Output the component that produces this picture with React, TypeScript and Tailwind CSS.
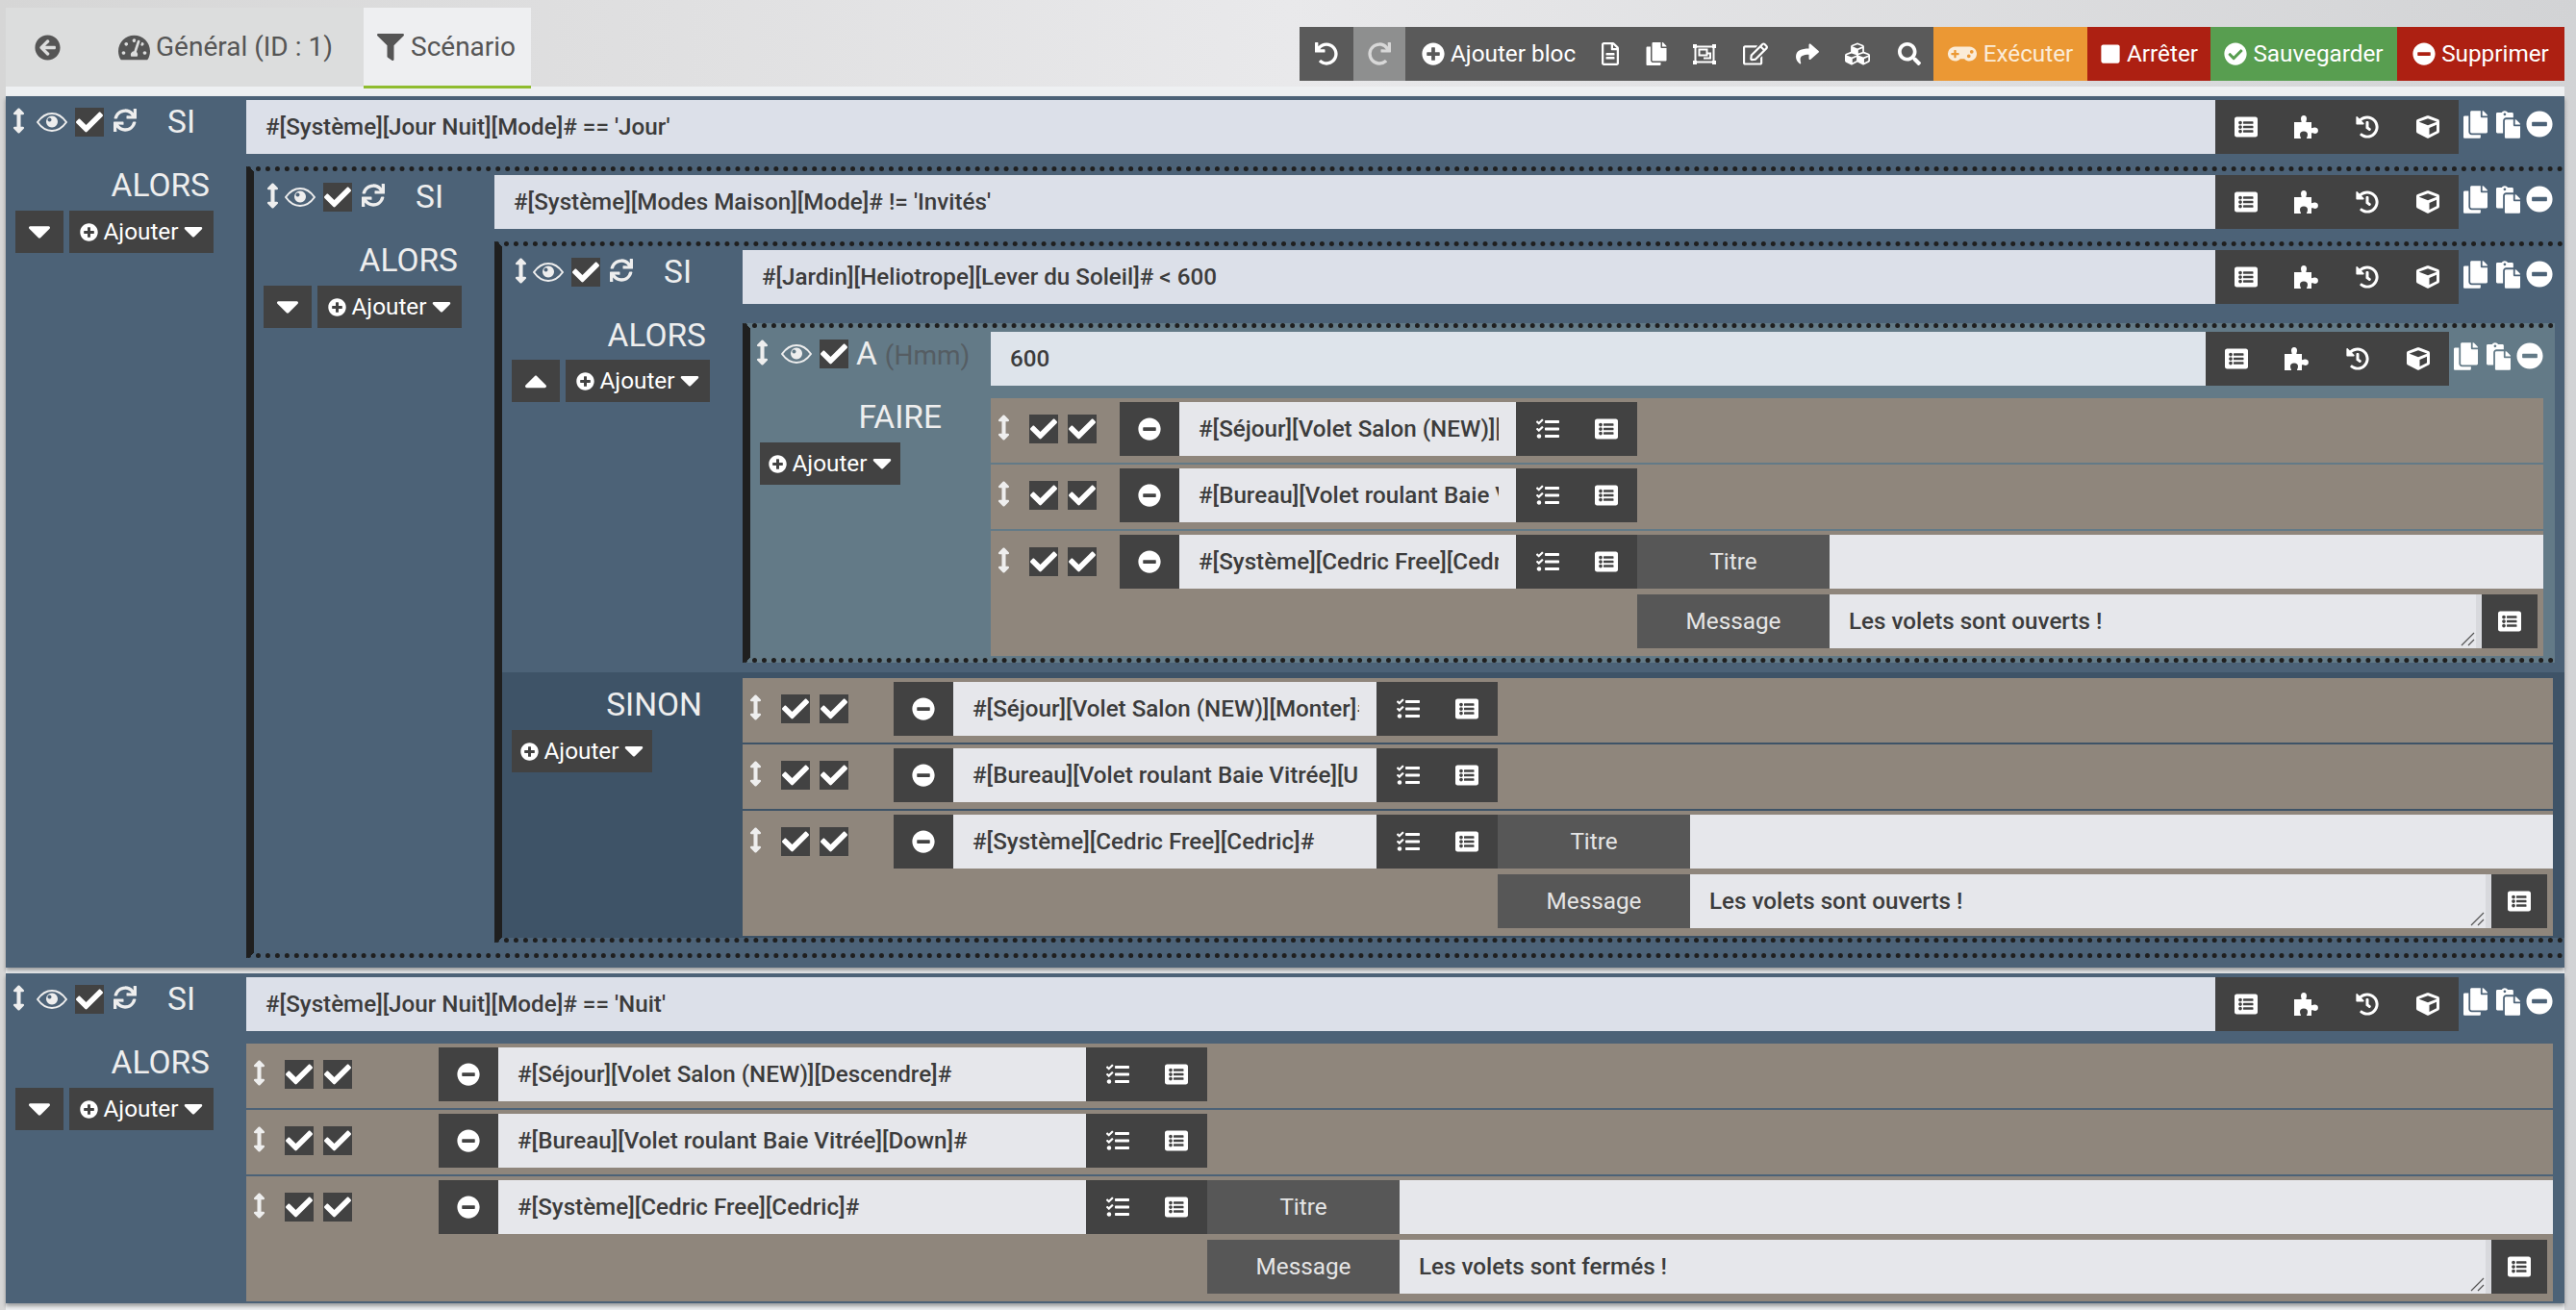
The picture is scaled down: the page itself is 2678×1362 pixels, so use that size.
import React from 'react';
import {
  FaArrowCircleLeft, FaTachometerAlt, FaFilter, FaUndo, FaRedo, FaPlusCircle, FaRegFileAlt, FaCopy,
  FaRegEdit, FaShare, FaCubes, FaSearch, FaGamepad, FaStop, FaCheckCircle, FaMinusCircle,
  FaListAlt, FaHistory, FaCube, FaPaste, FaArrowsAltV, FaCheck, FaSync, FaCaretDown,
  FaCaretUp, FaTasks,
} from 'react-icons/fa';

const EyeIcon = () => (
  <svg className="mt-[5px] h-[20px] w-[32px] shrink-0" viewBox="0 0 32 20">
    <path d="M1 10 C6 3 11 1 16 1 C21 1 26 3 31 10 C26 17 21 19 16 19 C11 19 6 17 1 10Z" fill="none" stroke="currentColor" strokeWidth="2" />
    <path fillRule="evenodd" fill="currentColor" d="M16 3.5 a6 6 0 1 0 0.01 0Z M13.5 5.5 a2 2 0 1 1 -0.01 0Z" />
  </svg>
);

const PuzzleIcon = () => (
  <svg className="ml-[2px] h-[24px] w-[27px]" viewBox="0 0 27 24" fill="currentColor">
    <path d="M0 7 H7.5 C8 6 7 5.5 7 3.5 A3 3.5 0 0 1 13 3.5 C13 5.5 12 6 12.5 7 H18 V13 C19 13.5 20 12.5 22 12.5 A3.5 3.3 0 0 1 22 19 C20 19 19 18 18 18.5 V24 H13 C13 22.5 14 22 14 20 A4 3.5 0 0 0 6 20 C6 22 7 22.5 7 24 H0 Z" />
  </svg>
);

const GroupIcon = () => (
  <svg className="h-[21px] w-[24px]" viewBox="0 0 24 21" fill="none" stroke="currentColor" strokeWidth="2">
    <rect x="2.5" y="2.5" width="19" height="16" />
    <rect x="6.5" y="5.5" width="8" height="6" />
    <path d="M11 14.5 H18 V9.5 H15" />
    <g fill="currentColor" stroke="none">
      <rect x="0" y="0" width="4" height="4" />
      <rect x="20" y="0" width="4" height="4" />
      <rect x="0" y="17" width="4" height="4" />
      <rect x="20" y="17" width="4" height="4" />
    </g>
  </svg>
);

const CheckBox = () => (
  <span className="flex h-[30px] w-[30px] shrink-0 items-center justify-center bg-[#424242] text-white">
    <FaCheck size={28} />
  </span>
);

const AddButton = ({ width }: { width: string }) => (
  <div className={`${width} flex h-[44px] items-center justify-center gap-[6px] bg-[#424242] text-[24.3px] text-white`}>
    <FaPlusCircle size={19} />
    <span>Ajouter</span>
    <FaCaretDown className="-mt-[2px] h-[32px] w-[20px]" />
  </div>
);

const FoldButton = ({ up }: { up?: boolean }) => (
  <div className="flex h-[44px] w-[50px] items-center justify-center bg-[#424242] text-white">
    {up ? <FaCaretUp className="h-[38px] w-[24px]" /> : <FaCaretDown className="-mt-[2px] h-[38px] w-[24px]" />}
  </div>
);

const Controls = ({ arrowPad, label, refresh = true }: { arrowPad: string; label: string; refresh?: boolean }) => (
  <div className="flex h-[30px] items-start text-[#eeeeee]">
    <span className={`${arrowPad} flex w-[32px] shrink-0`}>
      <FaArrowsAltV className="h-[27px] w-[13px]" />
    </span>
    <EyeIcon />
    <span className="ml-[8px]"><CheckBox /></span>
    {refresh ? (
      <>
        <FaSync className="ml-[10px] mt-[1px] h-[24px] w-[24px] shrink-0" />
        <span className="ml-[32px] text-[33.5px] leading-[30px]">{label}</span>
      </>
    ) : (
      <span className="ml-[8px] flex items-baseline whitespace-nowrap text-[33.5px] leading-[30px]">
        {label}
        <span className="ml-[8px] text-[28px] text-[#555d63]">(Hmm)</span>
      </span>
    )}
  </div>
);

const ToolsBlock = () => (
  <div className="grid h-[56px] w-[253px] shrink-0 grid-cols-4 place-items-center bg-[#424242] text-white">
    <FaListAlt size={24} />
    <PuzzleIcon />
    <FaHistory size={24} />
    <FaCube size={24} />
  </div>
);

const ExprRow = ({ text, light }: { text: string; light?: boolean }) => (
  <div className="flex pr-[12px]">
    <div className={`${light ? 'bg-[#dee4eb]' : 'bg-[#dce0e9]'} h-[56px] min-w-0 flex-1 truncate pl-[20px] text-[24.2px] leading-[56px] font-medium text-[#3c3c3c]`}>
      {text}
    </div>
    <ToolsBlock />
    <div className="flex w-[98px] shrink-0 items-start pl-[5px] pt-[11px] text-white">
      <FaCopy className="h-[29px] w-[25px] shrink-0" />
      <FaPaste className="ml-[9px] h-[29px] w-[25px] shrink-0" />
      <FaMinusCircle className="ml-[6px] h-[28px] w-[28px] shrink-0" />
    </div>
  </div>
);

const Field = ({ label, value, area }: { label: string; value?: string; area?: boolean }) => (
  <div className={`${area ? 'mt-[6px] pr-[6px]' : ''} flex h-[56px]`}>
    <div className="flex w-[200px] shrink-0 items-center justify-center bg-[#575757] text-[24.3px] text-[#e5e5e5]">{label}</div>
    <div className="relative h-[56px] min-w-0 flex-1 bg-[#e6e7eb] pl-[20px] text-[24.2px] leading-[56px] font-medium text-[#3c3c3c]">
      {value}
      {area && (
        <svg className="absolute bottom-[2px] right-[1px] h-[15px] w-[15px]" viewBox="0 0 15 15" fill="none" stroke="#555" strokeWidth="1.2">
          <path d="M1 14 L14 1 M8 14 L14 8" />
        </svg>
      )}
    </div>
    {area && (
      <>
        <div className="h-[56px] w-[6px] shrink-0 bg-[#d8d9dd]" />
        <div className="flex w-[58px] shrink-0 items-center justify-center bg-[#424242] text-white">
          <FaListAlt size={24} />
        </div>
      </>
    )}
  </div>
);

type RowProps = { left: string; input: string; text: string; message?: string };

const ActionRow = ({ left, input, text, message }: RowProps) => (
  <div className={`${message ? 'h-[130px]' : 'h-[67px]'} flex bg-[#8f867c] pt-[4px]`}>
    <div className={`${left} flex h-[56px] shrink-0 items-start pt-[13px] text-[#eeeeee]`}>
      <span className="flex w-[40px] shrink-0 pl-[7px]">
        <FaArrowsAltV className="h-[27px] w-[13px]" />
      </span>
      <CheckBox />
      <span className="ml-[10px]"><CheckBox /></span>
    </div>
    <div className="flex h-[56px] w-[62px] shrink-0 items-center justify-center bg-[#424242] text-white">
      <FaMinusCircle size={24} />
    </div>
    <div className={`${input} h-[56px] shrink-0 bg-[#e6e7eb] pl-[20px] pr-[18px]`}>
      <div className="overflow-hidden whitespace-nowrap text-[24.2px] leading-[56px] font-medium text-[#3c3c3c]">{text}</div>
    </div>
    <div className="flex h-[56px] w-[126px] shrink-0 items-center bg-[#424242] pl-[21px] text-white">
      <FaTasks size={24} />
      <FaListAlt size={24} className="ml-[37px]" />
    </div>
    {message && (
      <div className="min-w-0 flex-1">
        <Field label="Titre" />
        <Field label="Message" value={message} area />
      </div>
    )}
  </div>
);

const Actions = ({ left, wide, names, message }: { left: string; wide: string; names: string[]; message: string }) => (
  <div className="flex flex-col gap-[2px]">
    {names.map((n, i) => (
      <ActionRow key={n} left={left} input={wide} text={n} message={i === 2 ? message : undefined} />
    ))}
  </div>
);

const Column = ({ children, word, wordPad }: { children: React.ReactNode; word: string; wordPad: string }) => (
  <>
    {children}
    <div className={`${wordPad} mt-[31px] h-[40px] text-right text-[33.5px] leading-[40px] text-[#eeeeee]`}>{word}</div>
  </>
);

const Dotted = 'border-y-[5px] border-l-8 border-dotted border-[#1f1f1f] [border-left-style:solid]';

export default function App() {
  return (
    <div className="h-[1362px] w-[2678px] overflow-hidden bg-gradient-to-r from-[#d6d6d6] via-[#e9e9eb] to-[#d2d3d5] pl-[6px] pr-[12px] [font-family:Roboto,sans-serif]">
      {/* tabs and toolbar */}
      <header className="flex h-[90px] items-start pt-[8px]">
        <div className="flex h-[82px] w-[372px] shrink-0 items-center bg-[#dcdddd] text-[28px] text-[#555555]">
          <FaArrowCircleLeft size={27} className="ml-[30px]" />
          <FaTachometerAlt size={33} className="ml-[60px]" />
          <span className="ml-[6px] whitespace-nowrap">Général (ID : 1)</span>
        </div>
        <div className="relative z-10 flex h-[84px] w-[174px] shrink-0 items-center border-b-[3px] border-[#8fbc2f] bg-[#eeeff1] pl-[14px] text-[28px] text-[#555555]">
          <FaFilter size={28} />
          <span className="ml-[7px]">Scénario</span>
        </div>
        <div className="ml-auto mt-[20px] flex h-[56px] text-[24.3px] text-white">
          <div className="flex w-[56px] items-center justify-center bg-[#5a5a5a]"><FaUndo size={24} /></div>
          <div className="flex w-[54px] items-center justify-center bg-[#8e8f8f] text-[#d8d8d8]"><FaRedo size={24} /></div>
          <div className="flex w-[549px] items-center bg-[#5a5a5a]">
            <div className="flex w-[189px] shrink-0 items-center pl-[17px]">
              <FaPlusCircle size={24} />
              <span className="ml-[6px] whitespace-nowrap">Ajouter bloc</span>
            </div>
            <div className="flex w-[48px] justify-center"><FaRegFileAlt size={24} /></div>
            <div className="flex w-[48px] justify-center"><FaCopy size={24} /></div>
            <div className="flex w-[52px] justify-center"><GroupIcon /></div>
            <div className="flex w-[54px] justify-center"><FaRegEdit size={26} /></div>
            <div className="flex w-[54px] justify-center"><FaShare size={24} /></div>
            <div className="flex w-[50px] justify-center"><FaCubes size={26} /></div>
            <div className="flex w-[54px] justify-center pl-[4px]"><FaSearch size={24} /></div>
          </div>
          <div className="flex w-[160px] items-center justify-center gap-[7px] bg-[#eb9834] text-[#fbecd8]"><FaGamepad size={30} /><span>Exécuter</span></div>
          <div className="flex w-[128px] items-center justify-center gap-[6px] bg-[#ad2012]"><FaStop size={22} /><span>Arrêter</span></div>
          <div className="flex w-[194px] items-center justify-center gap-[6px] bg-[#589e50]"><FaCheckCircle size={24} /><span>Sauvegarder</span></div>
          <div className="flex w-[174px] items-center justify-center gap-[6px] bg-[#ad2012]"><FaMinusCircle size={24} /><span>Supprimer</span></div>
        </div>
      </header>

      <main className="h-[1272px] bg-[#eef0f2] pt-[10px]">
        {/* premier bloc SI */}
        <section className="flex h-[906px] bg-[#4c6277] pt-[4px] shadow-[0_3px_4px_rgba(0,0,0,0.35)]">
          <div className="w-[250px] shrink-0 pt-[8px]">
            <Column word="ALORS" wordPad="pr-[38px]">
              <Controls arrowPad="pl-[7px]" label="SI" />
            </Column>
            <div className="ml-[10px] mt-[6px] flex gap-[6px]">
              <FoldButton />
              <AddButton width="w-[150px]" />
            </div>
          </div>
          <div className="min-w-0 flex-1">
            <ExprRow text="#[Système][Jour Nuit][Mode]# == 'Jour'" />

            <div className={`${Dotted} mt-[13px] flex pt-[4px] pb-[11px]`}>
              <div className="w-[250px] shrink-0 pt-[8px]">
                <Column word="ALORS" wordPad="pr-[38px]">
                  <Controls arrowPad="pl-[13px]" label="SI" />
                </Column>
                <div className="ml-[10px] mt-[6px] flex gap-[6px]">
                  <FoldButton />
                  <AddButton width="w-[150px]" />
                </div>
              </div>
              <div className="min-w-0 flex-1">
                <ExprRow text="#[Système][Modes Maison][Mode]# != 'Invités'" />

                <div className={`${Dotted} mt-[13px]`}>
                  <div className="flex pt-[4px] pb-[10px]">
                    <div className="w-[250px] shrink-0 pt-[8px]">
                      <Column word="ALORS" wordPad="pr-[38px]">
                        <Controls arrowPad="pl-[13px]" label="SI" />
                      </Column>
                      <div className="ml-[10px] mt-[5px] flex gap-[6px]">
                        <FoldButton up />
                        <AddButton width="w-[150px]" />
                      </div>
                    </div>
                    <div className="min-w-0 flex-1">
                      <ExprRow text="#[Jardin][Heliotrope][Lever du Soleil]# < 600" />

                      <div className={`${Dotted} mr-[10px] mt-[20px] flex bg-[#637a87] pt-[4px] pb-[2px]`}>
                        <div className="w-[250px] shrink-0 pt-[8px]">
                          <Column word="FAIRE" wordPad="pr-[51px]">
                            <Controls arrowPad="pl-[6px]" label="A" refresh={false} />
                          </Column>
                          <div className="ml-[10px] mt-[6px]">
                            <AddButton width="w-[146px]" />
                          </div>
                        </div>
                        <div className="min-w-0 flex-1">
                          <ExprRow text="600" light />
                          <div className="mr-[12px] mt-[13px]">
                            <Actions
                              left="w-[134px]"
                              wide="w-[350px]"
                              names={['#[Séjour][Volet Salon (NEW)][Monter]#', '#[Bureau][Volet roulant Baie Vitrée][Up]#', '#[Système][Cedric Free][Cedric]#']}
                              message="Les volets sont ouverts !"
                            />
                          </div>
                        </div>
                      </div>
                    </div>
                  </div>

                  <div className="flex bg-[#3e5367] pt-[6px] pb-[2px]">
                    <div className="w-[250px] shrink-0 pt-[8px]">
                      <div className="h-[40px] pr-[42px] text-right text-[33.5px] leading-[40px] text-[#eeeeee]">SINON</div>
                      <div className="ml-[10px] mt-[6px]">
                        <AddButton width="w-[146px]" />
                      </div>
                    </div>
                    <div className="min-w-0 flex-1 pr-[12px]">
                      <Actions
                        left="w-[157px]"
                        wide="w-[440px]"
                        names={['#[Séjour][Volet Salon (NEW)][Monter]#', '#[Bureau][Volet roulant Baie Vitrée][Up]#', '#[Système][Cedric Free][Cedric]#']}
                        message="Les volets sont ouverts !"
                      />
                    </div>
                  </div>
                </div>
              </div>
            </div>
          </div>
        </section>

        {/* second bloc SI */}
        <section className="mt-[6px] flex h-[343px] bg-[#4c6277] pt-[4px] shadow-[0_3px_4px_rgba(0,0,0,0.35)]">
          <div className="w-[250px] shrink-0 pt-[8px]">
            <Column word="ALORS" wordPad="pr-[38px]">
              <Controls arrowPad="pl-[7px]" label="SI" />
            </Column>
            <div className="ml-[10px] mt-[6px] flex gap-[6px]">
              <FoldButton />
              <AddButton width="w-[150px]" />
            </div>
          </div>
          <div className="min-w-0 flex-1">
            <ExprRow text="#[Système][Jour Nuit][Mode]# == 'Nuit'" />
            <div className="mr-[12px] mt-[13px]">
              <Actions
                left="w-[200px]"
                wide="w-[611px]"
                names={['#[Séjour][Volet Salon (NEW)][Descendre]#', '#[Bureau][Volet roulant Baie Vitrée][Down]#', '#[Système][Cedric Free][Cedric]#']}
                message="Les volets sont fermés !"
              />
            </div>
          </div>
        </section>
      </main>
    </div>
  );
}
